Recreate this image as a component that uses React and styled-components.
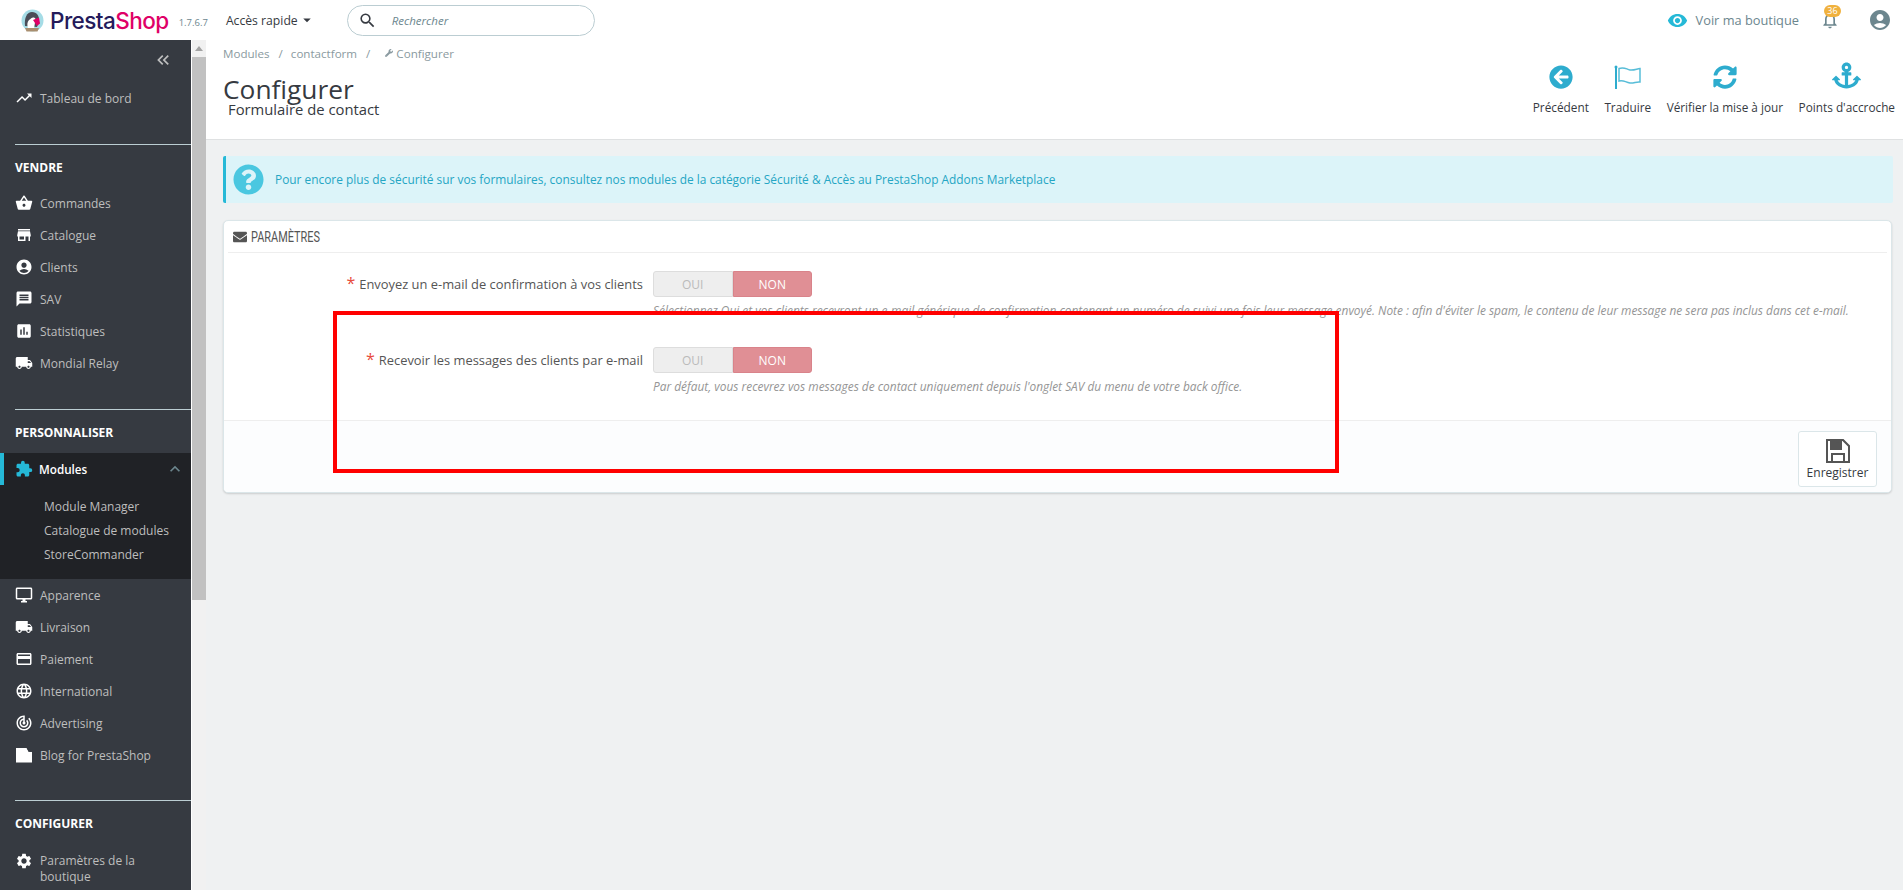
import React from "react";
import styled, { createGlobalStyle } from "styled-components";
import {
  MdTrendingUp, MdShoppingBasket, MdStore, MdAccountCircle, MdMessage, MdAssessment, MdLocalShipping,
  MdExtension, MdOutlineDesktopWindows, MdCreditCard, MdLanguage, MdTrackChanges, MdSettings, MdExpandLess,
  MdKeyboardDoubleArrowLeft, MdSearch, MdVisibility, MdNotificationsNone, MdArrowDropDown,
} from "react-icons/md";
import { FaArrowCircleLeft, FaSyncAlt, FaAnchor, FaEnvelope, FaWrench, FaQuestionCircle } from "react-icons/fa";

const Global = createGlobalStyle`
  html, body { margin: 0; padding: 0; height: 890px; overflow: hidden; background: #eff1f2; }
  body { font-family: "Open Sans", "Liberation Sans", sans-serif; font-size: 12px; color: #363a41; }
  * { box-sizing: border-box; }
`;

const Page = styled.div`
  position: relative;
  width: 1903px;
  height: 890px;
  overflow: hidden;
  display: flex;
  flex-direction: column;
`;

/* ---------- top bar ---------- */
const TopBar = styled.header`
  height: 40px;
  flex: none;
  background: #fff;
  display: flex;
  align-items: center;
  padding: 0 11px 0 21px;
`;
const LogoMark = styled.svg`
  width: 23px;
  height: 25px;
  flex: none;
  margin-right: 6px;
`;
const LogoText = styled.span`
  font-family: "Inter", "Lato", sans-serif;
  font-size: 22.5px;
  font-weight: 500;
  letter-spacing: -0.55px;
  color: #251b5b;
  em { font-style: normal; color: #df0067; }
`;
const Version = styled.span`
  font-size: 9.5px;
  color: #6c868e;
  margin: 4px 0 0 10px;
`;
const QuickAccess = styled.span`
  display: flex;
  align-items: center;
  margin-left: 18px;
  font-size: 12.2px;
  color: #363a41;
  svg { font-size: 18px; margin-left: 0; }
`;
const SearchBox = styled.div`
  width: 248px;
  height: 31px;
  margin-left: 31px;
  border: 1px solid #bbcdd2;
  border-radius: 16px;
  display: flex;
  align-items: center;
  padding-left: 10px;
  color: #363a41;
  svg { font-size: 19px; }
  span { margin-left: 15px; font-size: 11.5px; font-style: italic; color: #6c868e; }
`;
const TopRight = styled.div`
  margin-left: auto;
  display: flex;
  align-items: center;
`;
const ShopLink = styled.span`
  display: flex;
  align-items: center;
  gap: 8px;
  font-size: 12.8px;
  color: #6c868e;
  svg { font-size: 21px; color: #25b9d7; }
`;
const Bell = styled.span`
  position: relative;
  display: flex;
  margin-left: 21px;
  color: #6c868e;
  svg { font-size: 20px; }
`;
const Badge = styled.span`
  position: absolute;
  top: -5px;
  left: 4px;
  width: 17px;
  height: 12px;
  border-radius: 6px;
  background: #f0b13e;
  color: #fff;
  font-size: 9px;
  line-height: 12px;
  text-align: center;
`;
const Account = styled.span`
  display: flex;
  margin-left: 28px;
  color: #6c868e;
  svg { font-size: 24px; }
`;

/* ---------- body ---------- */
const Body = styled.div`
  flex: 1;
  min-height: 0;
  display: flex;
`;
const Sidebar = styled.nav`
  width: 191px;
  flex: none;
  background: #363a41;
  overflow: hidden;
  display: flex;
  flex-direction: column;
`;
const Collapse = styled.div`
  height: 42px;
  flex: none;
  display: flex;
  justify-content: flex-end;
  align-items: flex-start;
  padding: 10px 18px 0 0;
  color: #bebebe;
  svg { font-size: 20px; }
`;
const NavItem = styled.div`
  height: 32px;
  flex: none;
  display: flex;
  align-items: center;
  padding-left: 15px;
  font-size: 12px;
  color: #bebebe;
  svg { width: 18px; height: 18px; flex: none; color: #fff; margin-right: 7px; }
`;
const ActiveItem = styled(NavItem)`
  background: #202226;
  color: #fff;
  border-left: 4px solid #25b9d7;
  padding-left: 11px;
  padding-right: 6px;
  font-size: 11.7px;
  font-weight: 600;
  svg { color: #25b9d7; margin-right: 6px; }
  svg:last-child { margin: 0 0 0 auto; color: #6c868e; width: 20px; height: 20px; }
`;
const SubMenu = styled.div`
  background: #202226;
  padding: 10px 0 12px 44px;
  flex: none;
  font-size: 12px;
  color: #bebebe;
  div { height: 24px; line-height: 24px; }
`;
const Section = styled.div`
  flex: none;
  margin-left: 15px;
  border-top: 1px solid #bbcdd2;
  padding: ${(p) => p.$top}px 0 ${(p) => p.$bottom}px;
  font-size: 12px;
  font-weight: 700;
  color: #fff;
  line-height: 17px;
`;
const Gap = styled.div`
  flex: none;
  height: ${(p) => p.$h}px;
`;
const WrapItem = styled(NavItem)`
  height: auto;
  align-items: flex-start;
  line-height: 16px;
  svg { margin-top: -1px; }
  span { width: 120px; }
`;

const Scrollbar = styled.div`
  width: 15px;
  flex: none;
  background: #f1f1f1;
  border-left: 1px solid #fff;
`;
const ScrollUp = styled.div`
  height: 17px;
  display: flex;
  justify-content: center;
  padding-top: 6px;
  &::before {
    content: "";
    border: 4px solid transparent;
    border-top: 0;
    border-bottom: 5px solid #a3a3a3;
    height: 0;
  }
`;
const ScrollThumb = styled.div`
  height: 543px;
  background: #c1c1c1;
`;

/* ---------- main ---------- */
const Main = styled.main`
  flex: 1;
  min-width: 0;
  display: flex;
  flex-direction: column;
`;
const Toolbar = styled.div`
  height: 100px;
  flex: none;
  background: #fff;
  border-bottom: 1px solid #dfe1e2;
  display: flex;
  justify-content: space-between;
  padding: 5px 8px 0 17px;
`;
const Crumbs = styled.div`
  font-size: 11.6px;
  color: #8a9aa0;
  display: flex;
  align-items: center;
  height: 16px;
  i { font-style: normal; margin: 0 8px 0 9px; }
  svg { font-size: 8px; margin-right: 3px; margin-left: 7px; }
`;
const Title = styled.h1`
  margin: 13px 0 0 0;
  font-size: 26.3px;
  font-weight: 400;
  line-height: 30px;
  color: #363a41;
`;
const SubTitle = styled.h4`
  margin: -4px 0 0 5px;
  font-size: 14.8px;
  font-weight: 400;
  line-height: 18px;
  color: #363a41;
`;
const Actions = styled.div`
  display: flex;
  align-items: flex-start;
  gap: 15.5px;
  padding-top: 20px;
`;
const Action = styled.div`
  display: flex;
  flex-direction: column;
  align-items: center;
  font-size: 11.8px;
  line-height: 16px;
  color: #363a41;
  white-space: nowrap;
  svg { width: 24px; height: 24px; color: #2eacce; margin-bottom: 10px; }
`;
const AnchorIcon = styled(FaAnchor)`
  && { width: 29px; height: 27px; margin: -3px 0 10px; }
`;
const FlagIcon = styled.svg`
  && { width: 28px; height: 24px; }
`;
const Content = styled.div`
  padding: 16px 10px 0 17px;
  display: flex;
  flex-direction: column;
`;
const Alert = styled.div`
  height: 47px;
  background: #dcf4f9;
  border-left: 3px solid #25b9d7;
  border-radius: 2px;
  display: flex;
  align-items: center;
  padding: 0 0 1px 7px;
  color: #25a6c4;
  font-size: 11.9px;
  svg { width: 31px; height: 31px; color: #4ac7e0; margin-right: 11px; }
`;
const Panel = styled.section`
  margin: 17px 1px 0 0;
  height: 273px;
  background: #fff;
  border: 1px solid #dbe6e9;
  border-radius: 5px;
  box-shadow: 0 1px 2px rgba(0, 0, 0, 0.15);
  display: flex;
  flex-direction: column;
  overflow: hidden;
`;
const PanelHead = styled.div`
  height: 32px;
  flex: none;
  margin: 0 4px;
  border-bottom: 1px solid #eee;
  display: flex;
  align-items: center;
  padding-left: 5px;
  font-family: "Roboto", sans-serif;
  font-size: 14px;
  color: #555;
  svg { font-size: 14px; margin-right: 4px; }
  span { display: inline-block; transform: scaleX(0.78); transform-origin: left center; }
`;
const Form = styled.div`
  flex: 1;
  min-height: 0;
  padding-top: 18px;
`;
const Row = styled.div`
  display: grid;
  grid-template-columns: 419px 1fr;
  column-gap: 10px;
  height: 76px;
`;
const Label = styled.label`
  text-align: right;
  font-size: 12.9px;
  line-height: 25px;
  color: #555;
  white-space: nowrap;
  b { color: #e74c3c; font-weight: 400; font-size: 16px; margin-right: 4px; }
`;
const Field = styled.div`
  min-width: 0;
`;
const Switch = styled.div`
  display: flex;
  width: 159px;
  height: 26px;
`;
const SwitchSide = styled.span`
  flex: 1;
  display: flex;
  align-items: center;
  justify-content: center;
  font-size: 12px;
  border-radius: ${(p) => (p.$on ? "0 3px 3px 0" : "3px 0 0 3px")};
  background: ${(p) => (p.$on ? "#e08f95" : "#eee")};
  border: 1px solid ${(p) => (p.$on ? "#d9838a" : "#ddd")};
  color: ${(p) => (p.$on ? "#fff" : "#bbb")};
`;
const Help = styled.p`
  margin: 5px 0 0;
  font-size: 11.9px;
  line-height: 16px;
  font-style: italic;
  color: #959595;
  white-space: nowrap;
`;
const PanelFoot = styled.div`
  height: 72px;
  flex: none;
  background: #fcfdfe;
  border-top: 1px solid #eee;
  display: flex;
  justify-content: flex-end;
  align-items: flex-start;
  padding: 10px 14px 0 0;
`;
const SaveButton = styled.div`
  width: 79px;
  height: 56px;
  background: #fff;
  border: 1px solid #dbe6e9;
  border-radius: 3px;
  display: flex;
  flex-direction: column;
  align-items: center;
  padding-top: 7px;
  font-size: 12px;
  line-height: 16px;
  color: #363a41;
  svg { width: 24px; height: 24px; color: #555; margin-bottom: 2px; }
`;
const Highlight = styled.div`
  position: absolute;
  left: 333px;
  top: 311px;
  width: 1006px;
  height: 162px;
  border: 4px solid #f00;
  pointer-events: none;
`;

const Logo = () => (
  <LogoMark viewBox="0 0 23 25">
    <circle cx="11.500" cy="12.500" r="11" fill="#a5dce6" />
    <path d="M4 18C3 10 6 4 11 4s7 4 7 8l-2 7z" fill="#4a4d58" />
    <path d="M7 21c-1-4-1-7 1-9 2-1.500 3-3 5-2.500 2 .5 2 3 1 5l-1 6.500z" fill="#fff" />
    <path d="M12 12l6-2.500 1 6-3 2.500z" fill="#df0067" />
    <path d="M4 20h14l-1.500 3.500h-11z" fill="#a98f70" />
  </LogoMark>
);
const Flag = () => (
  <FlagIcon viewBox="0 0 28 24" fill="none" stroke="currentColor">
    <circle cx="2" cy="2" r="1.500" fill="currentColor" stroke="none" />
    <path d="M2 2v22" strokeWidth="2" />
    <path d="M5 3.500c5-2 7 .5 11 1.500 4 .5 6.500-1 10-1.500v13.500c-4-.5-6 1.500-10 1-5-1-7-3.500-11-2z" strokeWidth="1.500" opacity="0.8" />
  </FlagIcon>
);
const Floppy = () => (
  <svg viewBox="0 0 24 24">
    <path fillRule="evenodd" fill="currentColor" d="M0 0h17.500L24 6.500V24H0zM2 2v20h20V7.500L16.500 2h-.5v9H4V2z" />
    <path fillRule="evenodd" fill="currentColor" d="M4 2h12v9H4zM10 3.500v5.500h3V3.500zM5 14h14v8h-2v-6H7v6H5z" />
  </svg>
);
const BlogIcon = () => (
  <svg viewBox="0 0 18 18">
    <path fill="currentColor" d="M1 2h10.500l2 3.500 3.500 .5v10.500H1z" />
    <path fill="#363a41" d="M12 2l5 4-3.500-.2z" />
  </svg>
);

const SAVE_HELP =
  "Sélectionnez Oui et vos clients recevront un e-mail générique de confirmation contenant un numéro de suivi une fois leur message envoyé. Note : afin d'éviter le spam, le contenu de leur message ne sera pas inclus dans cet e-mail.";

const Toggle = () => (
  <Switch>
    <SwitchSide>OUI</SwitchSide>
    <SwitchSide $on>NON</SwitchSide>
  </Switch>
);

export default function App() {
  return (
    <Page>
      <Global />
      <TopBar>
        <Logo />
        <LogoText>Presta<em>Shop</em></LogoText>
        <Version>1.7.6.7</Version>
        <QuickAccess>Accès rapide<MdArrowDropDown /></QuickAccess>
        <SearchBox><MdSearch /><span>Rechercher</span></SearchBox>
        <TopRight>
          <ShopLink><MdVisibility />Voir ma boutique</ShopLink>
          <Bell><MdNotificationsNone /><Badge>36</Badge></Bell>
          <Account><MdAccountCircle /></Account>
        </TopRight>
      </TopBar>
      <Body>
        <Sidebar>
          <Collapse><MdKeyboardDoubleArrowLeft /></Collapse>
          <NavItem><MdTrendingUp />Tableau de bord</NavItem>
          <Gap $h={30} />
          <Section $top={14} $bottom={11}>VENDRE</Section>
          <NavItem><MdShoppingBasket />Commandes</NavItem>
          <NavItem><MdStore />Catalogue</NavItem>
          <NavItem><MdAccountCircle />Clients</NavItem>
          <NavItem><MdMessage />SAV</NavItem>
          <NavItem><MdAssessment />Statistiques</NavItem>
          <NavItem><MdLocalShipping />Mondial Relay</NavItem>
          <Gap $h={30} />
          <Section $top={14} $bottom={12}>PERSONNALISER</Section>
          <ActiveItem><MdExtension />Modules<MdExpandLess /></ActiveItem>
          <SubMenu>
            <div>Module Manager</div>
            <div>Catalogue de modules</div>
            <div>StoreCommander</div>
          </SubMenu>
          <NavItem><MdOutlineDesktopWindows />Apparence</NavItem>
          <NavItem><MdLocalShipping />Livraison</NavItem>
          <NavItem><MdCreditCard />Paiement</NavItem>
          <NavItem><MdLanguage />International</NavItem>
          <NavItem><MdTrackChanges />Advertising</NavItem>
          <NavItem><BlogIcon />Blog for PrestaShop</NavItem>
          <Gap $h={29} />
          <Section $top={14} $bottom={21}>CONFIGURER</Section>
          <WrapItem><MdSettings /><span>Paramètres de la boutique</span></WrapItem>
        </Sidebar>
        <Scrollbar>
          <ScrollUp />
          <ScrollThumb />
        </Scrollbar>
        <Main>
          <Toolbar>
            <div>
              <Crumbs>Modules<i>/</i>contactform<i>/</i><FaWrench />Configurer</Crumbs>
              <Title>Configurer</Title>
              <SubTitle>Formulaire de contact</SubTitle>
            </div>
            <Actions>
              <Action><FaArrowCircleLeft />Précédent</Action>
              <Action><Flag />Traduire</Action>
              <Action><FaSyncAlt />Vérifier la mise à jour</Action>
              <Action><AnchorIcon />Points d'accroche</Action>
            </Actions>
          </Toolbar>
          <Content>
            <Alert>
              <FaQuestionCircle />
              Pour encore plus de sécurité sur vos formulaires, consultez nos modules de la catégorie Sécurité &amp; Accès au PrestaShop Addons Marketplace
            </Alert>
            <Panel>
              <PanelHead><FaEnvelope /><span>PARAMÈTRES</span></PanelHead>
              <Form>
                <Row>
                  <Label><b>*</b>Envoyez un e-mail de confirmation à vos clients</Label>
                  <Field><Toggle /><Help>{SAVE_HELP}</Help></Field>
                </Row>
                <Row>
                  <Label><b>*</b>Recevoir les messages des clients par e-mail</Label>
                  <Field><Toggle /><Help>Par défaut, vous recevrez vos messages de contact uniquement depuis l'onglet SAV du menu de votre back office.</Help></Field>
                </Row>
              </Form>
              <PanelFoot>
                <SaveButton><Floppy />Enregistrer</SaveButton>
              </PanelFoot>
            </Panel>
          </Content>
        </Main>
      </Body>
      <Highlight />
    </Page>
  );
}
